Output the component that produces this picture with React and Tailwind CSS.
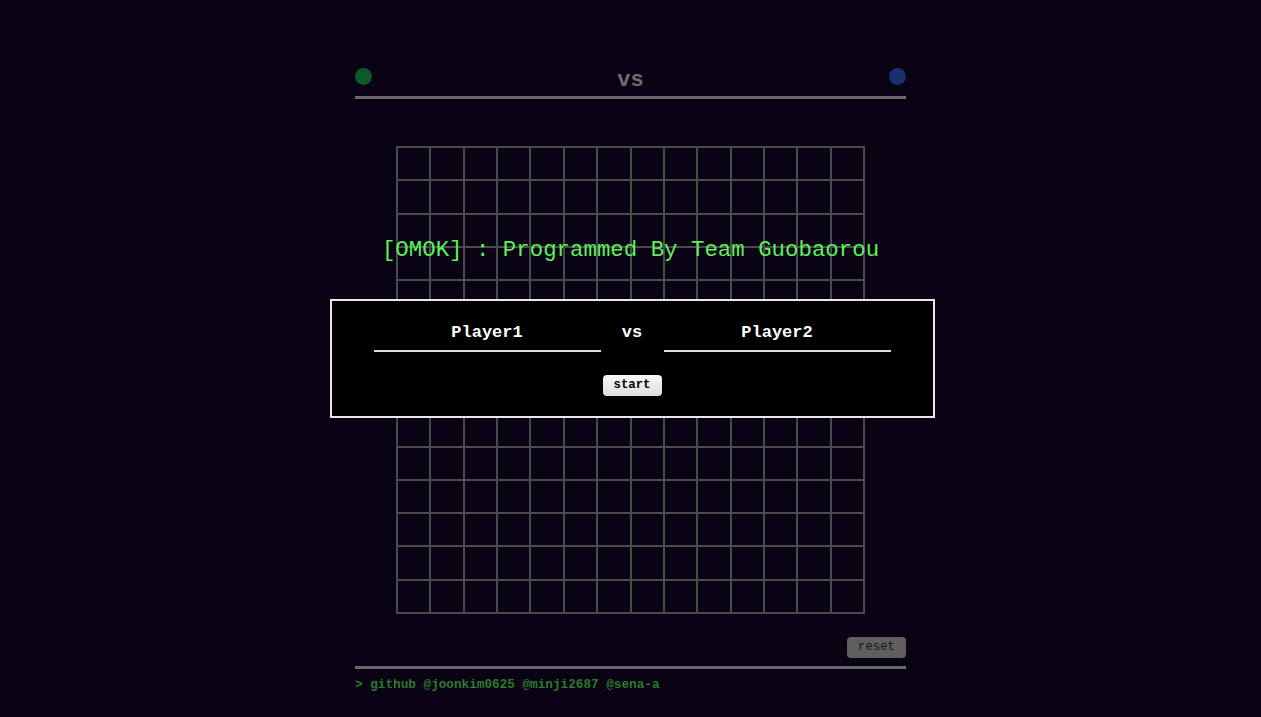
import React, { useState } from 'react';

const SIZE = 14;

function Board() {
  const cells = [];
  for (let r = 0; r < SIZE; r++) {
    for (let c = 0; c < SIZE; c++) {
      cells.push(
        <div key={`${r}-${c}`} className="border-r-2 border-b-2 border-[#4a4a4a]" />
      );
    }
  }
  return (
    <div className="grid grid-cols-[repeat(14,1fr)] grid-rows-[repeat(14,1fr)] w-[469px] h-[468px] border-l-2 border-t-2 border-[#4a4a4a]">
      {cells}
    </div>
  );
}

function PlayerInput({ value, onChange }) {
  return (
    <input
      type="text"
      value={value}
      onChange={(e) => onChange(e.target.value)}
      className="w-[227px] bg-transparent text-center text-white font-bold text-[17px] border-b-2 border-[#dcdcdc] outline-none pb-[7px] leading-[20px]"
    />
  );
}

export default function App() {
  const [player1, setPlayer1] = useState('Player1');
  const [player2, setPlayer2] = useState('Player2');

  return (
    <div
      className="min-h-[717px] bg-[#0a0314]"
      style={{ fontFamily: '"Liberation Mono", "Courier New", monospace' }}
    >
      <div className="w-[551px] mx-auto pt-[68px]">
        {/* header */}
        <div className="flex items-start justify-between h-[28px]">
          <div className="w-[17px] h-[17px] rounded-full bg-[#0b5a2c]" />
          <div className="text-[22px] font-bold text-[#6e6e6e] leading-[22px] mt-[2px]">vs</div>
          <div className="w-[17px] h-[17px] rounded-full bg-[#19306e]" />
        </div>
        <div className="h-[3px] bg-[#6a6a6a]" />

        {/* board + overlay */}
        <div className="relative flex justify-center mt-[47px]">
          <Board />
          <div className="absolute inset-x-0 top-0 flex flex-col items-center">
            <div className="mt-[92px] text-[22.4px] leading-[24px] text-[#5cf05c] whitespace-nowrap">
              [OMOK] : Programmed By Team Guobaorou
            </div>
            <div className="mt-[37px] ml-[3px] w-[605px] h-[119px] shrink-0 bg-black border-2 border-[#e8e8e8] flex flex-col items-center pt-[22px]">
              <div className="flex items-end">
                <PlayerInput value={player1} onChange={setPlayer1} />
                <div className="w-[63px] text-center text-white font-bold text-[17px] leading-[20px] pb-[9px]">vs</div>
                <PlayerInput value={player2} onChange={setPlayer2} />
              </div>
              <button className="mt-[23px] w-[59px] h-[21px] rounded-[4px] bg-gradient-to-b from-[#f8f8f8] to-[#dedede] text-black font-bold text-[12.3px] leading-[21px]">
                start
              </button>
            </div>
          </div>
        </div>

        {/* reset */}
        <div className="flex justify-end mt-[23px]">
          <button className="w-[59px] h-[21px] rounded-[4px] bg-[#5f5f5f] text-[#161616] text-[12.3px] leading-[21px]">
            reset
          </button>
        </div>
        <div className="h-[3px] bg-[#6a6a6a] mt-[8px]" />
        <div className="mt-[8px] text-[12.7px] font-bold text-[#2c7a2c] leading-[16px]">
          &gt; github @joonkim0625 @minji2687 @sena-a
        </div>
      </div>
    </div>
  );
}
